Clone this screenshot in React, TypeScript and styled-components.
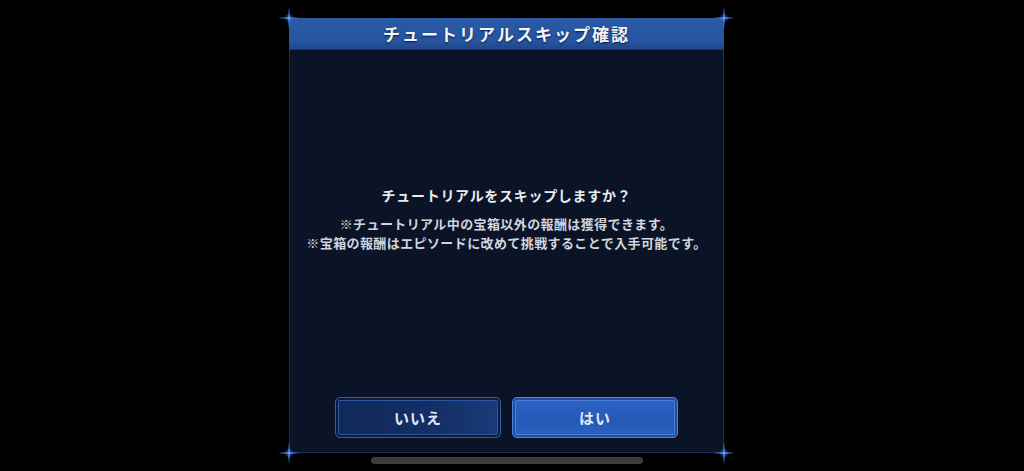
import React from 'react'
import styled, { createGlobalStyle, css } from 'styled-components'

const GlobalStyle = createGlobalStyle`
  html, body {
    margin: 0;
    padding: 0;
    background: #000;
  }
  body {
    font-family: "Noto Sans CJK JP", "Noto Sans", sans-serif;
  }
`

const Screen = styled.div`
  width: 1024px;
  height: 471px;
  display: flex;
  flex-direction: column;
  align-items: center;
  padding-top: 18px;
  box-sizing: border-box;
  background: #000;
  overflow: hidden;
`

const Panel = styled.div`
  position: relative;
  width: 435px;
  height: 435px;
  display: flex;
  flex-direction: column;
  box-sizing: border-box;
  background: #0a1426;
  border: 1px solid #172f58;
  border-top: none;
  margin-right: 11px;
`

const Header = styled.div`
  height: 31px;
  margin: 0 -1px;
  display: flex;
  align-items: center;
  justify-content: center;
  background: linear-gradient(180deg, #2a5aa6 0%, #2553a0 80%, #1f4688 100%);
  border-bottom: 1px solid #1a3868;
  color: #f2f5fa;
  font-size: 17px;
  font-weight: 700;
  letter-spacing: 2px;
  text-shadow: 0 1px 2px rgba(0, 0, 0, 0.7);
`

const Body = styled.div`
  flex: 1;
  display: flex;
  flex-direction: column;
  align-items: center;
`

const Message = styled.div`
  flex: 1;
  display: flex;
  flex-direction: column;
  align-items: center;
  padding-top: 135px;
  text-align: center;
`

const Question = styled.div`
  color: #e8ecf2;
  font-size: 14px;
  font-weight: 700;
  letter-spacing: 0.7px;
  line-height: 20px;
  margin-bottom: 9px;
`

const Note = styled.div`
  color: #d0d5de;
  font-size: 13px;
  font-weight: 700;
  letter-spacing: 0.4px;
  line-height: 19px;
`

const Actions = styled.div`
  display: flex;
  gap: 11px;
  padding-bottom: 14px;
`

const Button = styled.button<{ $primary?: boolean }>`
  width: 166px;
  height: 41px;
  border-radius: 5px;
  font-family: inherit;
  font-size: 15px;
  font-weight: 700;
  letter-spacing: 1px;
  color: #e2e9f6;
  cursor: pointer;
  ${({ $primary }) =>
    $primary
      ? css`
          background: linear-gradient(180deg, #2b63c6 0%, #2659b6 60%, #2a62c2 100%);
          border: 1px solid #4c86da;
          box-shadow: inset 0 0 0 2px #1f4e9e, inset 0 0 0 3px #4a82d6;
        `
      : css`
          background: linear-gradient(90deg, #10295a 0%, #142f66 60%, #1a3a78 100%);
          border: 1px solid #2f5fae;
          box-shadow: inset 0 0 0 2px #0c1b3c, inset 0 0 0 3px #2a56a2;
        `}
`

const Corner = styled.svg<{ $x: 'left' | 'right'; $y: 'top' | 'bottom' }>`
  position: absolute;
  width: 22px;
  height: 22px;
  ${({ $x }) => ($x === 'left' ? 'left: -12px;' : 'right: -12px;')}
  ${({ $y }) => ($y === 'top' ? 'top: -11px;' : 'bottom: -12px;')}
  pointer-events: none;
`

const HomeBar = styled.div`
  width: 272px;
  height: 7px;
  margin-top: 4px;
  margin-right: 10px;
  border-radius: 4px;
  background: #3c3c3e;
`

const Sparkle: React.FC<{ x: 'left' | 'right'; y: 'top' | 'bottom' }> = ({ x, y }) => (
  <Corner $x={x} $y={y} viewBox="0 0 22 22">
    <circle cx="11" cy="11" r="4" fill="#3a70d0" opacity="0.35" />
    <path
      d="M11 0 L12 10 L22 11 L12 12 L11 22 L10 12 L0 11 L10 10 Z"
      fill="#3f78d6"
    />
    <circle cx="11" cy="11" r="1.6" fill="#6f9ee8" />
  </Corner>
)

export default function App() {
  return (
    <>
      <GlobalStyle />
      <Screen>
        <Panel>
          <Header>チュートリアルスキップ確認</Header>
          <Body>
            <Message>
              <Question>チュートリアルをスキップしますか？</Question>
              <Note>※チュートリアル中の宝箱以外の報酬は獲得できます。</Note>
              <Note>※宝箱の報酬はエピソードに改めて挑戦することで入手可能です。</Note>
            </Message>
            <Actions>
              <Button>いいえ</Button>
              <Button $primary>はい</Button>
            </Actions>
          </Body>
          <Sparkle x="left" y="top" />
          <Sparkle x="right" y="top" />
          <Sparkle x="left" y="bottom" />
          <Sparkle x="right" y="bottom" />
        </Panel>
        <HomeBar />
      </Screen>
    </>
  )
}
